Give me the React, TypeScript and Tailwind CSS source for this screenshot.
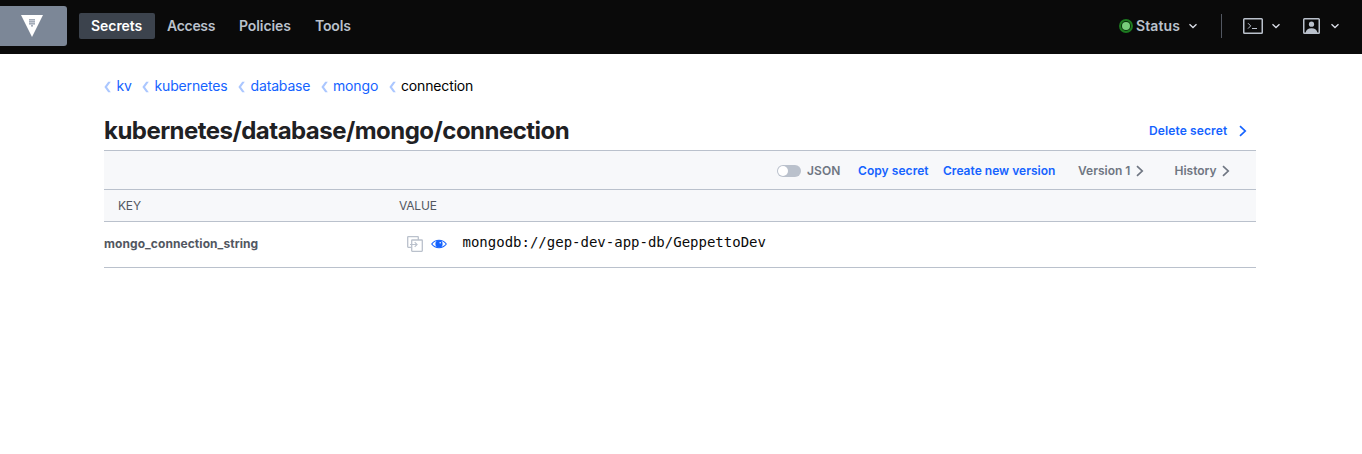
import React from "react";

const crumbs = [
  { label: "kv", width: "w-[38px]" },
  { label: "kubernetes", width: "w-[96px]" },
  { label: "database", width: "w-[82.5px]" },
  { label: "mongo", width: "w-[68px]" },
];

function Chevron({ className }: { className: string }) {
  return (
    <svg viewBox="0 0 8 12" className={className} fill="none" stroke="currentColor" strokeWidth="1.7">
      <path d="M1 1.2 6.2 6 1 10.8" />
    </svg>
  );
}

function ChevronDown() {
  return (
    <svg viewBox="0 0 8 6" className="h-[6px] w-[8px] shrink-0 text-[#dbdfe8]" fill="none" stroke="currentColor" strokeWidth="1.3">
      <path d="M.5 1.2 4 4.5 7.5 1.2" />
    </svg>
  );
}

function CrumbMark() {
  return (
    <svg viewBox="0 0 7 12" className="mt-[2px] h-[12px] w-[7px] shrink-0 text-[#abc7ff]" fill="currentColor">
      <path d="M4.2 .8H6.8L3 6l3.8 5.2H4.2L.4 6Z" />
    </svg>
  );
}

function Header() {
  return (
    <header className="flex h-[54px] items-start bg-[#0a0a0a] text-[14px] leading-[20px] font-semibold tracking-[-0.05px] text-[#bac1cc]">
      <div className="mt-[6px] flex h-[40px] w-[67px] rounded-r-[3px] bg-[#7c8797] pt-[9px] pl-[21px]">
        <svg viewBox="0 0 22 22" className="h-[22px] w-[22px]">
          <path d="M0 0H22L11 22Z" fill="#fff" />
          <path d="M8 4h6v6H8ZM10 10h2v2h-2Z" fill="#c6cbd4" />
          <path d="M8 4h6v1H8ZM8 6h6v1H8ZM8 8h6v1H8ZM10 10h2v1h-2Z" fill="#a4acb8" />
        </svg>
      </div>
      <nav className="mt-[13px] ml-[12px] flex h-[26px] items-center">
        <a className="flex h-[26px] w-[76px] items-center rounded-[2px] bg-[#3c434d] pl-[12px] text-white">Secrets</a>
        <a className="w-[72px] pl-[12px] tracking-[-0.3px]">Access</a>
        <a className="w-[76px] pl-[12px] tracking-[-0.1px]">Policies</a>
        <a className="w-[60px] pl-[12px] tracking-[-0.15px]">Tools</a>
      </nav>
      <div className="mt-[13px] ml-auto flex h-[26px] items-center pr-[23px]">
        <span className="h-[14px] w-[14px] rounded-full border-[2px] border-[#1d7a20] bg-[#0a2f0c] p-[1px]">
          <span className="block h-[8px] w-[8px] rounded-full bg-[#78cc7b]" />
        </span>
        <span className="ml-[3px] w-[53px] tracking-[0.1px]">Status</span>
        <ChevronDown />
        <span className="ml-[24px] h-[24px] w-px bg-[#525761]" />
        <svg viewBox="0 0 20 16" className="ml-[21px] h-[16px] w-[20px]" fill="none" stroke="#bac1cc">
          <rect x=".75" y=".75" width="18.5" height="14.5" rx=".8" strokeWidth="1.5" />
          <path d="m5 5.2 2.7 2.7L5 10.6M9 10.5h5" strokeWidth="1" />
        </svg>
        <span className="ml-[9px] flex"><ChevronDown /></span>
        <svg viewBox="0 0 17 16" className="ml-[23px] h-[16px] w-[17px]" fill="#bac1cc">
          <rect x=".75" y=".75" width="15.5" height="14.5" rx=".8" fill="none" stroke="#bac1cc" strokeWidth="1.5" />
          <circle cx="8.5" cy="6.2" r="2.6" />
          <path d="M2.5 15c.4-3.3 2.4-4.8 6-4.8s5.6 1.5 6 4.8Z" />
        </svg>
        <span className="ml-[11px] flex"><ChevronDown /></span>
      </div>
    </header>
  );
}

export default function App() {
  return (
    <div className="h-[454px] overflow-hidden bg-white font-['Inter','Liberation_Sans',sans-serif] whitespace-nowrap">
      <Header />
      <main className="ml-[104px] w-[1152px]">
        <nav className="flex h-[64px] pt-[22px] text-[14px] leading-[20px] tracking-[-0.15px] text-[#1563ff]">
          {crumbs.map((c) => (
            <a key={c.label} className={`${c.width} flex shrink-0 items-center gap-[5.5px] self-start`}>
              <CrumbMark />
              {c.label}
            </a>
          ))}
          <span className="flex items-center gap-[5.5px] self-start">
            <CrumbMark />
            <span className="text-black">connection</span>
          </span>
        </nav>
        <div className="flex h-[32px] items-start justify-between">
          <h1 className="text-[24px] leading-[26px] font-bold tracking-[-0.53px] text-[#1f2124]">kubernetes/database/mongo/connection</h1>
          <button className="mt-[5px] flex items-center text-[12px] leading-[16px] font-semibold text-[#1563ff]">
            <span className="w-[89.5px] text-left tracking-[0.12px]">Delete secret</span>
            <Chevron className="mr-[9.5px] h-[12px] w-[8px]" />
          </button>
        </div>
        <div className="flex h-[39px] items-center border-t border-[#bac1cc] bg-[#f7f8fa] pt-px pl-[673px] text-[12px] leading-[16px] font-semibold text-[#6f7682]">
          <span className="flex h-[12px] w-[24px] shrink-0 items-center rounded-full bg-[#bac1cc] px-px">
            <span className="h-[10px] w-[10px] rounded-full bg-white" />
          </span>
          <span className="ml-[6px] w-[51px] tracking-[0.1px]">JSON</span>
          <a className="w-[85px] tracking-[0.06px] text-[#1563ff]">Copy secret</a>
          <a className="w-[135px] tracking-[0.02px] text-[#1563ff]">Create new version</a>
          <span className="w-[57.5px]">Version 1</span>
          <Chevron className="h-[12px] w-[8px]" />
          <span className="ml-[31px] w-[47px]">History</span>
          <Chevron className="h-[12px] w-[8px]" />
        </div>
        <div className="flex h-[32px] items-center border-t border-[#bac1cc] bg-[#f7f8fa] pl-[14px] text-[12px] leading-[16px] text-[#525761]">
          <span className="w-[281px] tracking-[-0.2px]">KEY</span>
          <span className="tracking-[-0.2px]">VALUE</span>
        </div>
        <div className="flex h-[47px] items-center border-y border-[#bac1cc]">
          <span className="w-[303px] pb-px text-[12px] leading-[16px] font-bold tracking-[0.07px] text-[#525761]">mongo_connection_string</span>
          <svg viewBox="0 0 16 16" className="mb-px h-[16px] w-[16px]" fill="none" stroke="#bac1cc" strokeWidth="1.3">
            <path d="M4 11.3H1.2q-.5 0-.5-.5V1.2q0-.5.5-.5h9.600q.5 0 .5.5V4" />
            <rect x="4.7" y="4" width="10.6" height="11.3" rx=".5" />
            <path d="M3 8.5h7M7.7 6.1l2.4 2.4-2.4 2.4" strokeWidth="1.1" />
          </svg>
          <svg viewBox="0 0 16 10" className="mb-px ml-[8px] h-[10px] w-[16px]">
            <path d="M.7 5Q3.5 1.3 8 1.3t7.3 3.7Q12.5 8.7 8 8.7T.7 5Z" fill="#fff" stroke="#1563ff" strokeWidth="1.1" />
            <circle cx="8" cy="4.9" r="3.6" fill="#1563ff" />
            <circle cx="9.2" cy="3.7" r=".8" fill="#fff" />
          </svg>
          <code className="ml-[15.5px] pb-[5px] font-['DejaVu_Sans_Mono',monospace] text-[14px] leading-[20px] text-[#0a0a0a]">mongodb://gep-dev-app-db/GeppettoDev</code>
        </div>
      </main>
    </div>
  );
}
